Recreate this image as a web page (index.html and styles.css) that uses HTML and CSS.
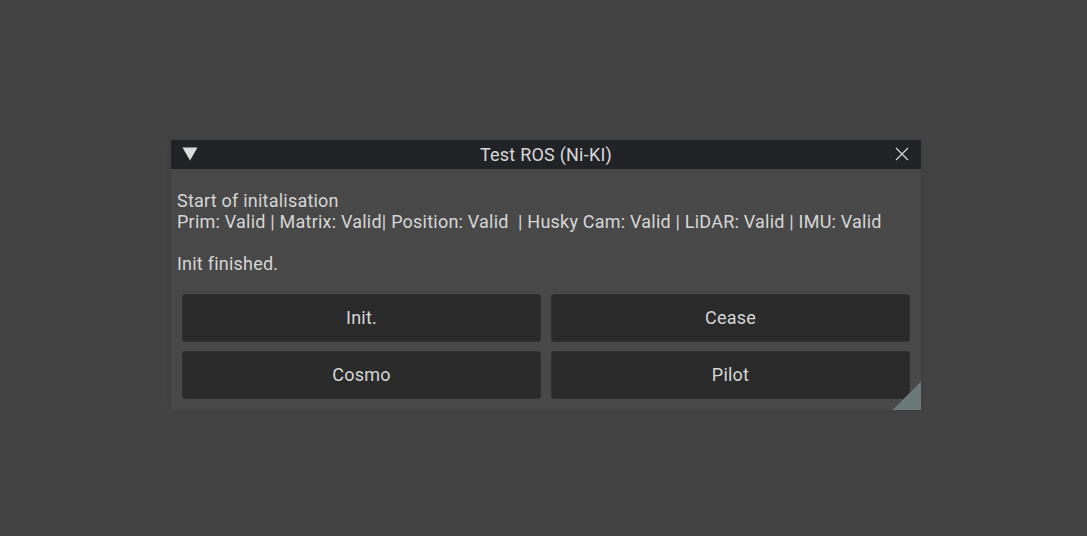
FILE: index.html
```html
<!DOCTYPE html>
<html>
<head>
<meta charset="utf-8">
<link rel="stylesheet" href="styles.css">
</head>
<body>
<div class="desk">
  <div class="window">
    <div class="titlebar">
      <svg class="collapse" width="16" height="14" viewBox="0 0 16 14"><polygon points="0.5,0.5 15.5,0.5 8,13.5" fill="#dcdcdc"/></svg>
      <div class="title">Test ROS (Ni-KI)</div>
      <svg class="close" width="14" height="14" viewBox="0 0 14 14"><path d="M1 1 L13 13 M13 1 L1 13" stroke="#d8d8d8" stroke-width="1.2" fill="none"/></svg>
    </div>
    <div class="content">
      <div class="log">
        <div class="line">Start of initalisation</div>
        <div class="line">Prim: Valid | Matrix: Valid| Position: Valid&nbsp; | Husky Cam: Valid | LiDAR: Valid | IMU: Valid</div>
        <div class="line">&nbsp;</div>
        <div class="line">Init finished.</div>
      </div>
      <div class="buttons">
        <button class="btn">Init.</button>
        <button class="btn">Cease</button>
        <button class="btn">Cosmo</button>
        <button class="btn">Pilot</button>
      </div>
    </div>
    <div class="grip"></div>
  </div>
</div>
</body>
</html>
```
FILE: styles.css
```css
html, body {
  margin: 0;
  padding: 0;
  background: #434343;
  width: 1087px;
  height: 536px;
  overflow: hidden;
}
.desk {
  padding: 140px 0 0 171px;
}
.window {
  position: relative;
  width: 750px;
  height: 270px;
  background: #484848;
  box-shadow: 0 0 6px rgba(0,0,0,0.12);
  font-family: Roboto, "Liberation Sans", sans-serif;
  font-size: 18px;
  letter-spacing: 0.22px;
  color: #d6d6d6;
}
.titlebar {
  position: relative;
  height: 29px;
  background: #212226;
  display: flex;
  align-items: center;
  justify-content: center;
}
.collapse {
  position: absolute;
  left: 11px;
  top: 7px;
}
.close {
  position: absolute;
  left: 724px;
  top: 7px;
}
.title {
  line-height: 29px;
  color: #d8d8d8;
}
.content {
  padding: 21px 11px 0 6px;
}
.log {
  height: 84px;
}
.log .line {
  line-height: 21px;
  height: 21px;
  white-space: pre;
}
.buttons {
  margin-top: 20px;
  margin-left: 5px;
  display: grid;
  grid-template-columns: 359px 359px;
  grid-auto-rows: 48px;
  column-gap: 10px;
  row-gap: 9px;
}
.btn {
  background: #2a2a2a;
  border: 1px solid #303030;
  border-radius: 3px;
  color: #d6d6d6;
  font-family: Roboto, "Liberation Sans", sans-serif;
  font-size: 18px;
  letter-spacing: 0.22px;
  padding: 0 0 2px 0;
  margin: 0;
}
.grip {
  position: absolute;
  right: 0;
  bottom: 0;
  width: 28px;
  height: 28px;
  background: linear-gradient(to bottom right, transparent 50%, #6b7878 50%);
}
```
